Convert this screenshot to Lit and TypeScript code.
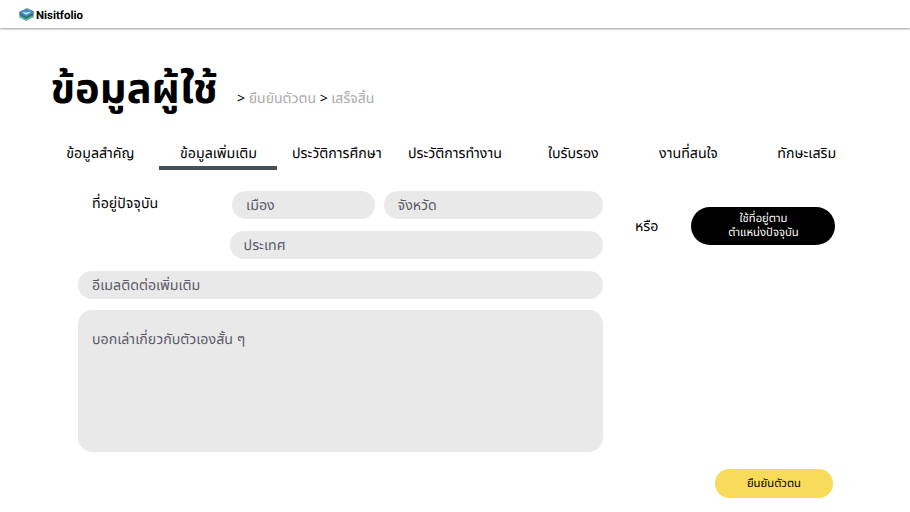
import { LitElement, html, css } from "lit";
import { customElement } from "lit/decorators.js";
import { classMap } from "lit/directives/class-map.js";

const TABS = [
  "ข้อมูลสำคัญ",
  "ข้อมูลเพิ่มเติม",
  "ประวัติการศึกษา",
  "ประวัติการทำงาน",
  "ใบรับรอง",
  "งานที่สนใจ",
  "ทักษะเสริม",
];

@customElement("app-root")
export class AppRoot extends LitElement {
  static styles = css`
    :host {
      display: block;
      height: 512px;
      overflow: hidden;
      background: #fff;
      color: #000;
      font-family: "Noto Sans Thai", "Noto Sans", sans-serif;
      font-size: 14.2px;
      line-height: 20px;
      white-space: nowrap;
      text-rendering: geometricPrecision;
    }
    * { box-sizing: border-box; }
    header {
      height: 28px;
      padding-left: 19px;
      display: flex;
      align-items: center;
      gap: 2px;
      box-shadow: 0 1px 2px rgba(0, 0, 0, 0.4);
    }
    header svg { width: 15px; height: 13px; }
    .brand { font: 700 11.45px/14px Roboto, sans-serif; padding-top: 1px; }
    .title {
      height: 113px;
      padding-left: 50.5px;
      display: flex;
    }
    h1 {
      margin: 31px 0 0;
      width: 186.5px;
      font-size: 41.6px;
      line-height: 64px;
      font-weight: 700;
    }
    .crumbs { margin-top: 62px; color: #aaa; font-size: 14.05px; }
    .crumbs b { color: #000; font-weight: 400; }
    nav {
      display: grid;
      grid-template-columns: repeat(4, 118.2px) 118.7px 111.5px 125px;
      margin-left: 40.9px;
      height: 29px;
    }
    .tab {
      text-align: center;
      padding: 4px 0 0 0.8px;
      border-bottom: 4px solid transparent;
    }
    .tab.active { border-color: #465059; }
    main {
      display: flex;
      margin: 21px 0 0 78px;
    }
    .form {
      width: 524.6px;
      display: flex;
      flex-direction: column;
      gap: 11.5px;
    }
    .row { display: flex; height: 28.3px; }
    .label { width: 154px; padding: 4px 0 0 14px; }
    .field {
      height: 28.3px;
      border-radius: 14.2px;
      padding: 2px 0 0 14px;
      line-height: 28px;
      background: #e9e9e9;
      color: #5b5b6b;
    }
    .city { width: 143px; margin-right: 8.6px; }
    .province { flex: 1; }
    .country { margin-left: 151.6px; }
    .bio { height: 141.5px; padding-top: 17px; }
    .or { margin: 27px 0 0 32.4px; width: 56px; }
    button {
      border: 0;
      padding: 1.6px 0 0 1px;
      font-family: inherit;
      font-size: 11.3px;
      text-rendering: inherit;
    }
    .locate {
      width: 144px;
      height: 38px;
      margin-top: 16px;
      border-radius: 19px;
      background: #000;
      color: #fff;
      line-height: 13.5px;
    }
    footer { padding: 17.4px 0 0 714.7px; }
    .confirm {
      display: block;
      width: 118.5px;
      height: 28.5px;
      padding-left: 0;
      border-radius: 14.3px;
      background: #f9db5b;
      color: #000;
    }
  `;

  render() {
    return html`
      <header>
        <svg viewBox="0 0 15 13">
          <path d="M.5 4.5 7.5 8 14.5 4.5V9L7 12.7.5 9.3Z" fill="#347f86" />
          <path d="M.6 7.6 7 11 14.4 7.2V9L7 12.5.6 9.2Z" fill="#58b98c" />
          <path d="M.6 6 7 9.5 14.4 5.8" fill="none" stroke="#2b5878" stroke-width=".8" />
          <path d="M.5 4 8 .5 14.5 3.5V5L7 8.7.5 5.5Z" fill="#4292c4" stroke="#367394" stroke-width=".6" />
          <path d="m3.5 4.5 2-.3 1.5.9 3.5-1.4 1 .6L7.3 6.4Z" fill="#eef8fc" />
        </svg>
        <span class="brand">Nisitfolio</span>
      </header>
      <div class="title">
        <h1>ข้อมูลผู้ใช้</h1>
        <div class="crumbs"><b>&gt;</b> ยืนยันตัวตน <b>&gt;</b> เสร็จสิ้น</div>
      </div>
      <nav>
        ${TABS.map((t, i) => html`<div class=${classMap({ tab: true, active: i === 1 })}><span>${t}</span></div>`)}
      </nav>
      <main>
        <div class="form">
          <div class="row">
            <div class="label">ที่อยู่ปัจจุบัน</div>
            <div class="field city">เมือง</div>
            <div class="field province">จังหวัด</div>
          </div>
          <div class="field country">ประเทศ</div>
          <div class="field">อีเมลติดต่อเพิ่มเติม</div>
          <div class="field bio">บอกเล่าเกี่ยวกับตัวเองสั้น ๆ</div>
        </div>
        <div class="or">หรือ</div>
        <button class="locate">ใช้ที่อยู่ตาม<br />ตำแหน่งปัจจุบัน</button>
      </main>
      <footer><button class="confirm">ยืนยันตัวตน</button></footer>
    `;
  }
}
